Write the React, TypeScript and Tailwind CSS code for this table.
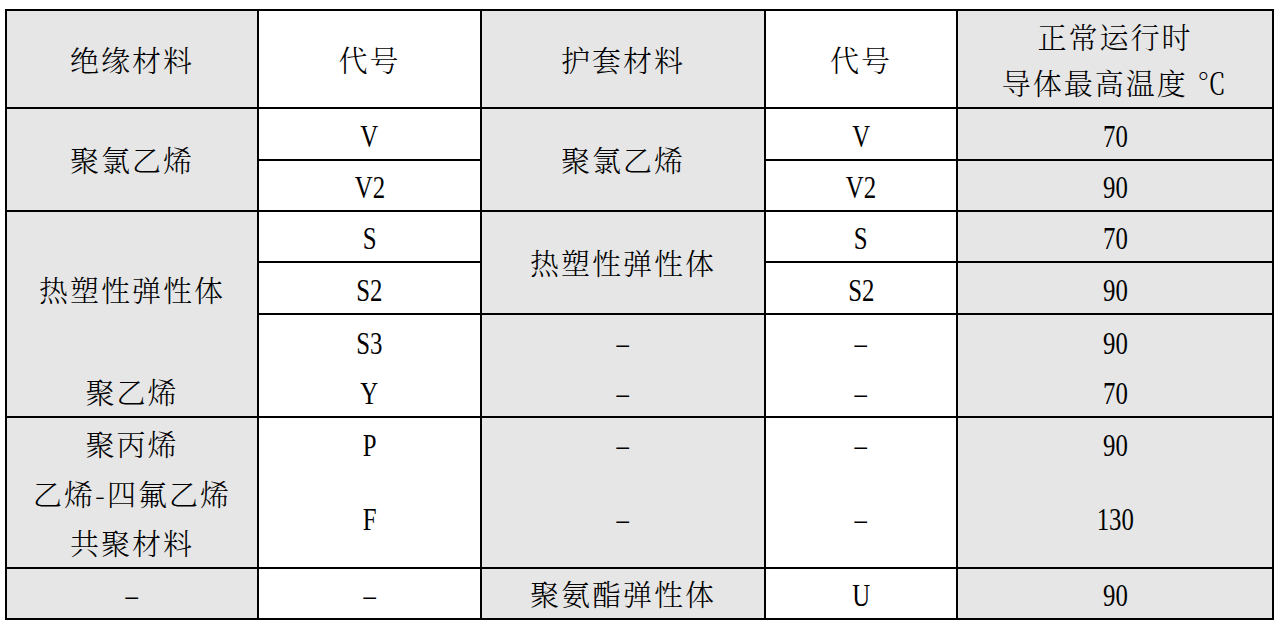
import type { ReactNode } from 'react';
import clsx from 'clsx';

// 绝缘和护套材料代号及导体最高温度表
const cjk = "font-['Noto_Serif_CJK_SC','Noto_Sans_CJK_SC',sans-serif] font-light text-[29px] tracking-[2px] leading-none";

const Latin = ({ children }: { children: ReactNode }) => (
    <span className="inline-block translate-y-[2px] font-['Liberation_Serif',serif] text-[31px] leading-none scale-x-[0.8]">{children}</span>
);

const Cell = ({ pos, gray, line = true, children }: { pos: string; gray?: boolean; line?: boolean; children?: ReactNode }) => (
    <div
        className={clsx(
            'flex flex-col items-center justify-center border-r-2 border-black text-black',
            line && 'border-b-2',
            gray ? 'bg-[#e6e6e6]' : 'bg-white',
            pos
        )}
    >
        {children}
    </div>
);

const Zh = ({ children }: { children: ReactNode }) => <span className={cjk}>{children}</span>;

export default function App() {
    return (
        <div className="min-h-screen bg-white pt-[9px] pl-[5px]">
            <div className="grid w-[1269px] grid-cols-[252px_223px_284px_192px_316px] grid-rows-[98px_52px_51px_51px_52px_52px_51px_50px_50px_51px_51px] border-l-2 border-t-2 border-black">
                {/* header */}
                <Cell pos="col-start-1 row-start-1" gray><Zh>绝缘材料</Zh></Cell>
                <Cell pos="col-start-2 row-start-1"><Zh>代号</Zh></Cell>
                <Cell pos="col-start-3 row-start-1" gray><Zh>护套材料</Zh></Cell>
                <Cell pos="col-start-4 row-start-1"><Zh>代号</Zh></Cell>
                <Cell pos="col-start-5 row-start-1" gray>
                    <div className="flex h-[46px] items-center"><Zh>正常运行时</Zh></div>
                    <div className="flex h-[46px] items-center"><Zh>导体最高温度 ℃</Zh></div>
                </Cell>

                {/* 聚氯乙烯 */}
                <Cell pos="col-start-1 row-start-2 row-span-2" gray><Zh>聚氯乙烯</Zh></Cell>
                <Cell pos="col-start-2 row-start-2"><Latin>V</Latin></Cell>
                <Cell pos="col-start-2 row-start-3"><Latin>V2</Latin></Cell>
                <Cell pos="col-start-3 row-start-2 row-span-2" gray><Zh>聚氯乙烯</Zh></Cell>
                <Cell pos="col-start-4 row-start-2"><Latin>V</Latin></Cell>
                <Cell pos="col-start-4 row-start-3"><Latin>V2</Latin></Cell>
                <Cell pos="col-start-5 row-start-2" gray><Latin>70</Latin></Cell>
                <Cell pos="col-start-5 row-start-3" gray><Latin>90</Latin></Cell>

                {/* 热塑性弹性体 / 聚乙烯 */}
                <Cell pos="col-start-1 row-start-4" gray line={false} />
                <Cell pos="col-start-1 row-start-5" gray line={false}><Zh>热塑性弹性体</Zh></Cell>
                <Cell pos="col-start-1 row-start-6" gray line={false} />
                <Cell pos="col-start-1 row-start-7" gray><Zh>聚乙烯</Zh></Cell>
                <Cell pos="col-start-2 row-start-4"><Latin>S</Latin></Cell>
                <Cell pos="col-start-2 row-start-5"><Latin>S2</Latin></Cell>
                <Cell pos="col-start-2 row-start-6" line={false}><Latin>S3</Latin></Cell>
                <Cell pos="col-start-2 row-start-7"><Latin>Y</Latin></Cell>
                <Cell pos="col-start-3 row-start-4 row-span-2" gray><Zh>热塑性弹性体</Zh></Cell>
                <Cell pos="col-start-3 row-start-6" gray line={false}><Latin>–</Latin></Cell>
                <Cell pos="col-start-3 row-start-7" gray><Latin>–</Latin></Cell>
                <Cell pos="col-start-4 row-start-4"><Latin>S</Latin></Cell>
                <Cell pos="col-start-4 row-start-5"><Latin>S2</Latin></Cell>
                <Cell pos="col-start-4 row-start-6" line={false}><Latin>–</Latin></Cell>
                <Cell pos="col-start-4 row-start-7"><Latin>–</Latin></Cell>
                <Cell pos="col-start-5 row-start-4" gray><Latin>70</Latin></Cell>
                <Cell pos="col-start-5 row-start-5" gray><Latin>90</Latin></Cell>
                <Cell pos="col-start-5 row-start-6" gray line={false}><Latin>90</Latin></Cell>
                <Cell pos="col-start-5 row-start-7" gray><Latin>70</Latin></Cell>

                {/* 聚丙烯 / 乙烯-四氟乙烯共聚材料 */}
                <Cell pos="col-start-1 row-start-8" gray line={false}><Zh>聚丙烯</Zh></Cell>
                <Cell pos="col-start-1 row-start-9" gray line={false}><Zh>乙烯-四氟乙烯</Zh></Cell>
                <Cell pos="col-start-1 row-start-10" gray><Zh>共聚材料</Zh></Cell>
                <Cell pos="col-start-2 row-start-8" line={false}><Latin>P</Latin></Cell>
                <Cell pos="col-start-2 row-start-9 row-span-2"><Latin>F</Latin></Cell>
                <Cell pos="col-start-3 row-start-8" gray line={false}><Latin>–</Latin></Cell>
                <Cell pos="col-start-3 row-start-9 row-span-2" gray><Latin>–</Latin></Cell>
                <Cell pos="col-start-4 row-start-8" line={false}><Latin>–</Latin></Cell>
                <Cell pos="col-start-4 row-start-9 row-span-2"><Latin>–</Latin></Cell>
                <Cell pos="col-start-5 row-start-8" gray line={false}><Latin>90</Latin></Cell>
                <Cell pos="col-start-5 row-start-9 row-span-2" gray><Latin>130</Latin></Cell>

                {/* 聚氨酯弹性体 */}
                <Cell pos="col-start-1 row-start-11" gray><Latin>–</Latin></Cell>
                <Cell pos="col-start-2 row-start-11"><Latin>–</Latin></Cell>
                <Cell pos="col-start-3 row-start-11" gray><Zh>聚氨酯弹性体</Zh></Cell>
                <Cell pos="col-start-4 row-start-11"><Latin>U</Latin></Cell>
                <Cell pos="col-start-5 row-start-11" gray><Latin>90</Latin></Cell>
            </div>
        </div>
    );
}
